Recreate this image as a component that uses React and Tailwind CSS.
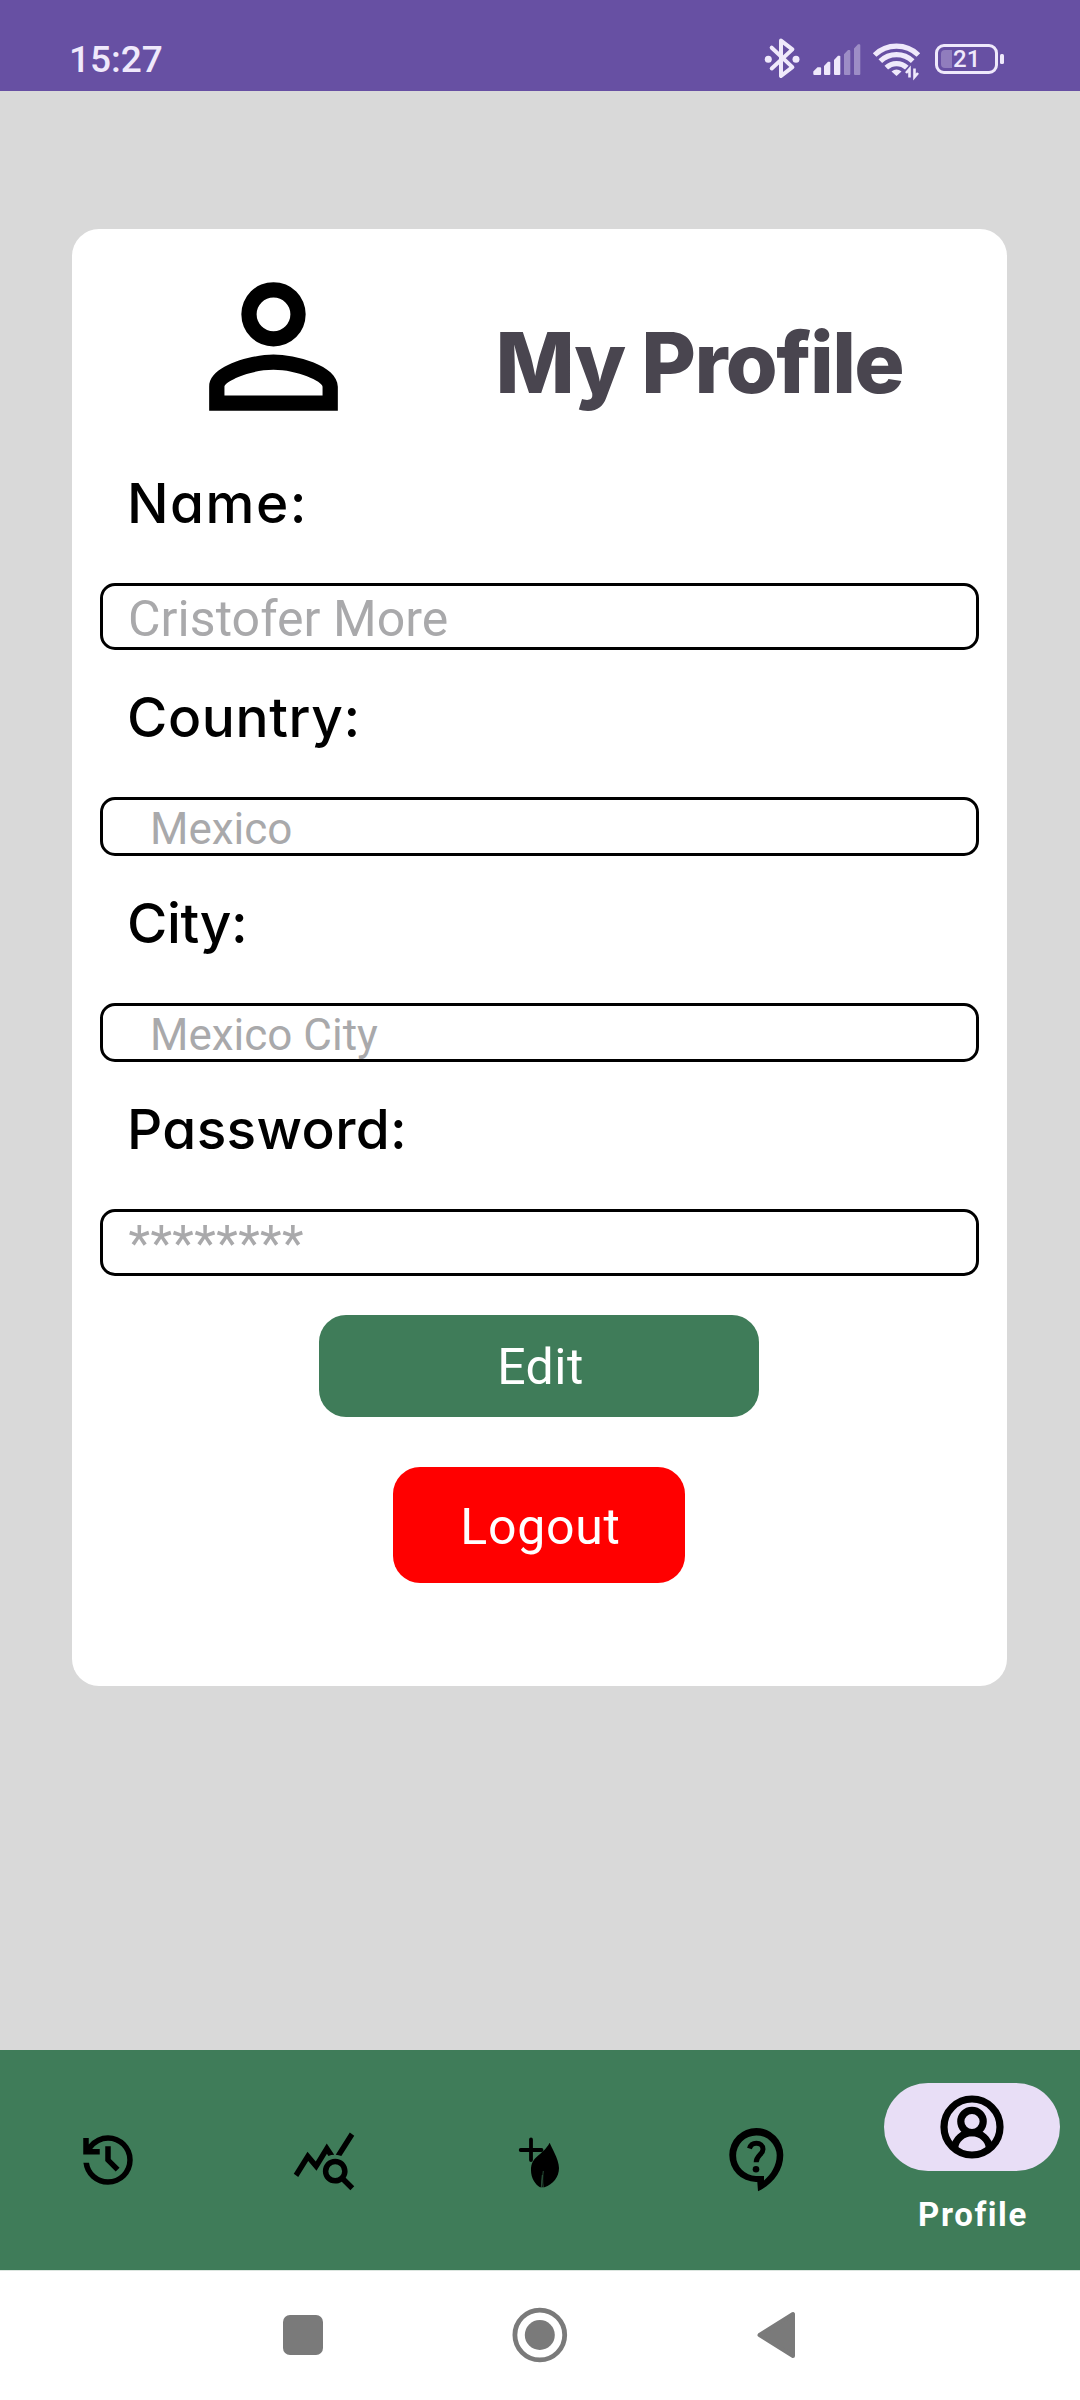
import { MdQueryStats } from "react-icons/md";

function StatusBar() {
  return (
    <header className="flex h-[91px] items-start justify-between bg-[#6750a3] pl-[69px] pr-[76px] text-[#efe9fb]">
      <span className="mt-[30px] text-[37px] leading-[60px] font-medium">15:27</span>
      <div className="mt-[34px] flex h-[50px] items-start">
        {/* Bluetooth */}
        <svg className="h-[50px] w-[40px]" viewBox="0 0 40 50" fill="none">
          <path d="M8.7 15.2 29.4 34.6 18 43.5V8.1l11.4 8.8L8.7 36" transform="translate(0 -1.5)" stroke="currentColor" strokeWidth="4" strokeLinejoin="round" strokeLinecap="round" />
          <circle cx="5.3" cy="25.2" r="3.5" fill="currentColor" />
          <circle cx="33" cy="25.2" r="3.5" fill="currentColor" />
        </svg>
        {/* Mobile signal */}
        <svg className="ml-[9.5px] h-[50px] w-[52px]" viewBox="0 0 52 50" fill="currentColor">
          <path d="M.3 37.500 4.500 33.200h2.700q.9 0 .9.9v6q0 1-1 1h-5.800q-1 0-1-1z" />
          <path d="M11 32l4-4.300h1.400q.9 0 .9.900V40q0 1-1 1h-4.300q-1 0-1-1z" />
          <path d="M21 26l4-4.300h1.400q.9 0 .9.900V40q0 1-1 1h-4.300q-1 0-1-1z" />
          <g opacity=".4">
            <path d="M31 20.300l4-4.300h1.400q.9 0 .9.900V40q0 1-1 1h-4.300q-1 0-1-1z" />
            <path d="M41 14.600l4-4.300h1.400q.9 0 .9.900V40q0 1-1 1h-4.300q-1 0-1-1z" />
          </g>
        </svg>
        {/* Wi-Fi */}
        <svg className="ml-[6px] h-[50px] w-[52px]" viewBox="0 0 52 50" fill="none" stroke="currentColor" strokeWidth="5.200">
          <path d="M3.600 21a31.500 31.500 0 0 1 43.800 0" />
          <path d="M9.300 27.200a23.400 23.400 0 0 1 32.400 0" />
          <path d="M15.300 33.600a15 15 0 0 1 20.500 0" />
          <path d="M20.500 37.500q5-4 10 0l-5 4.500z" fill="currentColor" stroke="none" />
          <path d="M38.500 43.500v-8.500l-3.500 4M43.500 34.500V43l3.500-4" strokeWidth="2.600" />
        </svg>
        {/* Battery */}
        <div className="ml-[12.500px] mt-[10px] flex items-center">
          <div className="flex h-[30px] w-[63px] items-center rounded-[9px] border-[3px] border-current pl-[3px]">
            <span className="h-[18px] w-[11px] rounded-l-[4px] bg-[#efe9fb]/30" />
            <span className="ml-[1px] text-[24px] leading-[24px] font-medium">21</span>
          </div>
          <span className="ml-[2px] h-[10px] w-[4px] rounded-[1.500px] bg-current" />
        </div>
      </div>
    </header>
  );
}

function Field({ label, labelClass, boxClass, value }) {
  return (
    <div className="flex flex-col">
      <label className={`ml-[55px] h-[80px] text-[55px] leading-[80px] font-medium text-black font-['Inter',sans-serif] [font-feature-settings:'cv11'] ${labelClass}`}>
        {label}
      </label>
      <div className={`mx-[28px] mt-[40px] overflow-hidden rounded-[15px] border-[3px] border-black whitespace-nowrap text-[#a9a9ab] ${boxClass}`}>
        {value}
      </div>
    </div>
  );
}

function ProfileCard() {
  return (
    <section className="mt-[138px] ml-[72px] flex h-[1457px] w-[935px] flex-col rounded-[27px] bg-white">
      <div className="flex h-[234px] items-start">
        <svg className="mt-[21px] ml-[105px] size-[193px] shrink-0" viewBox="0 0 24 24" fill="black">
          <path d="M12 5.900a2.100 2.100 0 1 1 0 4.200 2.100 2.100 0 0 1 0-4.200m0 9c2.970 0 6.100 1.460 6.100 2.100v1.100H5.900V17c0-.64 3.130-2.100 6.100-2.100M12 4a4 4 0 1 0 0 8 4 4 0 0 0 0-8zm0 9c-2.670 0-8 1.340-8 4v3h16v-3c0-2.660-5.330-4-8-4z" />
        </svg>
        <h1 className="mt-[84px] ml-[125.500px] text-[84px] leading-[100px] font-extrabold tracking-[-1.600px] whitespace-nowrap text-[#49454f] font-['Inter',sans-serif]">
          My Profile
        </h1>
      </div>
      <div className="flex flex-col gap-[27px]">
        <Field label="Name:" labelClass="tracking-[1.500px]" value="Cristofer More" boxClass="h-[67px] pl-[25px] text-[50px] leading-[67px] tracking-[0.050px]" />
        <Field label="Country:" labelClass="tracking-[0.600px]" value="Mexico" boxClass="h-[59px] pl-[47px] text-[44px] leading-[58px]" />
        <Field label="City:" labelClass="tracking-[-0.400px]" value="Mexico City" boxClass="h-[59px] pl-[47px] text-[44px] leading-[58px]" />
        <Field label="Password:" labelClass="tracking-[0.350px]" value="********" boxClass="h-[67px] pl-[25.500px] text-[50px] leading-[65px] tracking-[0.400px]" />
      </div>
      <button className="mt-[39px] ml-[247px] h-[102px] w-[440px] rounded-[27px] bg-[#3f7c59] pt-[3px] pl-[3px] text-[50px] leading-[99px] tracking-[0.500px] text-white">
        Edit
      </button>
      <button className="mt-[50px] ml-[321px] h-[116px] w-[292px] rounded-[27px] bg-[#ff0000] pt-[4px] pl-[3px] text-[50px] leading-[112px] tracking-[0.750px] text-white">
        Logout
      </button>
    </section>
  );
}

function NavItem({ children }) {
  return <button className="flex h-full w-[216px] items-center justify-center">{children}</button>;
}

function BottomNav() {
  return (
    <nav className="flex h-[220px] bg-[#3f7c59] text-black">
      <NavItem>
        <svg className="size-[66px]" viewBox="0 -960 960 960" fill="currentColor">
          <path d="M480-120q-138 0-240.500-91.500T122-440h82q14 104 92.500 172T480-200q117 0 198.500-81.500T760-480q0-117-81.500-198.500T480-760q-69 0-129 32t-101 88h110v80H120v-240h80v94q51-64 124.500-99T480-840q75 0 140.500 28.500t114 77q48.500 48.500 77 114T840-480q0 75-28.500 140.500t-77 114q-48.500 48.500-114 77T480-120Zm112-192L440-464v-216h80v184l128 128-56 56Z" />
        </svg>
      </NavItem>
      <NavItem>
        <MdQueryStats size={66} />
      </NavItem>
      <NavItem>
        <svg className="size-[66px]" viewBox="27 27 66 66" fill="none">
          <path d="M51 39.500v20.500M40.700 50h20.800" stroke="currentColor" strokeWidth="3.800" strokeLinecap="round" />
          <path d="M69.700 42.700C70.800 46.500 79 59 79 68c0 9-6 16.500-14.500 19.200h-4.500C55 84.500 51 77.500 51 70.500c0-15 11-14 18.700-27.800z" fill="currentColor" />
          <path d="M63.300 71C62.600 76 62.400 82 63.200 87M62.300 75C61.600 79 61.500 83 61.400 87" stroke="#3f7c59" strokeWidth=".6" />
        </svg>
      </NavItem>
      <NavItem>
        <svg className="size-[66px]" viewBox="243 27 66 66" fill="none">
          <path fillRule="evenodd" fill="currentColor" d="M278 91.300 277.300 82H276A27 27 0 1 1 303.300 55C303.300 71 292.500 84.500 278 91.300ZM284 80.500V76H276A20.300 20.300 0 1 1 296.700 55.300C296.700 66 291 74.500 284 80.500Z" />
          <path d="M269.500 48.500C270.500 45 273 43.300 276.300 43.300C280.200 43.300 283 45.600 283 49.200C283 54.500 276.200 55.500 276.200 62.300" stroke="currentColor" strokeWidth="5" />
          <circle cx="276" cy="69.300" r="3.300" fill="currentColor" />
        </svg>
      </NavItem>
      <button className="flex h-full w-[216px] flex-col items-center pt-[33px]">
        <span className="flex h-[88px] w-[176px] items-center justify-center rounded-full bg-[#e8def6]">
          <svg className="size-[66px]" viewBox="0 0 66 66" fill="none" stroke="currentColor" strokeWidth="7.200">
            <circle cx="33" cy="33" r="28" />
            <circle cx="33" cy="27.500" r="11.200" />
            <path d="M15.800 54C15.800 45.500 24 38.700 33 38.700S50.200 45.500 50.200 54" />
          </svg>
        </span>
        <span className="mt-[20px] ml-[2px] text-[33px] leading-[48px] font-bold tracking-[1.600px] text-white">Profile</span>
      </button>
    </nav>
  );
}

function SystemNav() {
  return (
    <footer className="flex h-[130px] items-start border-t border-[#dce6e0] bg-white pl-[282.500px]">
      <span className="mt-[44px] size-[40px] rounded-[7px] bg-[#7a7a7a]" />
      <svg className="mt-[34px] ml-[189.500px] h-[60px] w-[56px]" viewBox="0 0 56 60" fill="#7a7a7a">
        <circle cx="27.800" cy="30" r="24.900" fill="none" stroke="#7a7a7a" strokeWidth="4.800" />
        <circle cx="27.800" cy="30" r="15" />
      </svg>
      <svg className="mt-[38px] ml-[188px] h-[52px] w-[40px]" viewBox="0 0 40 52" fill="#7a7a7a" stroke="#7a7a7a" strokeWidth="4" strokeLinejoin="round">
        <path d="M3.500 26 37 5V47Z" />
      </svg>
    </footer>
  );
}

export default function App() {
  return (
    <div className="flex h-[2400px] w-[1080px] flex-col overflow-hidden bg-[#d9d9d9] font-['Roboto',sans-serif]">
      <StatusBar />
      <main className="flex flex-1 flex-col">
        <ProfileCard />
      </main>
      <BottomNav />
      <SystemNav />
    </div>
  );
}
